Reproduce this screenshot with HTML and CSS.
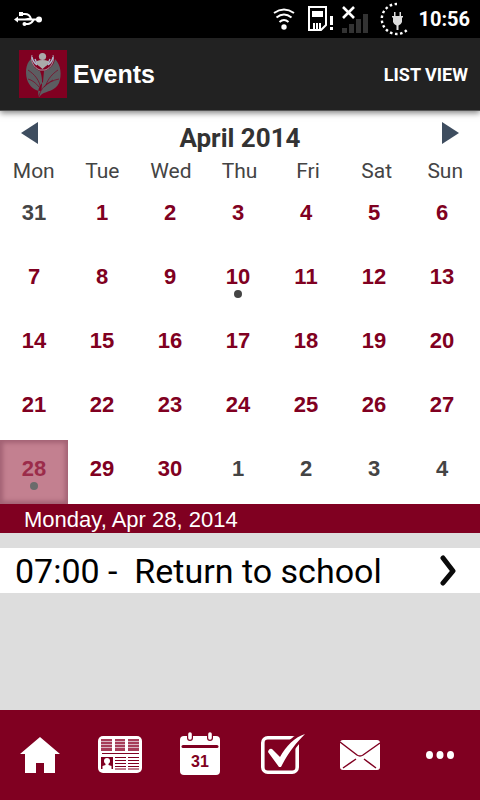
FILE: index.html
```html
<!DOCTYPE html>
<html lang="en">
<head>
  <meta charset="UTF-8">
  <meta name="viewport" content="width=device-width, initial-scale=1">
  <title>Events</title>
  <link rel="stylesheet" href="styles.css">
</head>
<body>

  <!-- Status bar -->
  <div class="status">
    <svg width="30" height="18" viewBox="0 0 30 18" fill="none" stroke="#fff" stroke-width="1.8">
      <path d="M3 9.500h22M11 9.500l6-1c-1-3-3-4.500-6-4.500H7M11 14h3c3 0 4-2 6-4.500" stroke-linejoin="round"/>
      <path d="M0 9.500l4-3v6z" fill="#fff" stroke="none"/>
      <rect x="5" y="2" width="4" height="4" fill="#fff" stroke="none"/>
      <circle cx="10.500" cy="14" r="2" fill="#fff" stroke="none"/>
      <circle cx="25" cy="9.500" r="3" fill="#fff" stroke="none"/>
    </svg>
    <div class="status-icons">
      <svg width="22" height="24" viewBox="0 0 22 24" fill="none" stroke="#fff" stroke-width="2">
        <path d="M1 6q10-7 20 0M3.500 10.500q7.500-6 15 0M6.500 15q4.500-4 9 0"/>
        <circle cx="11" cy="20" r="2.7" fill="#fff" stroke="none"/>
      </svg>
      <svg width="26" height="26" viewBox="0 0 26 26" fill="#fff">
        <path d="M1 1h17v18l-5 5H1z" fill="none" stroke="#fff" stroke-width="2"/>
        <path d="M4 5h11v6H4zM5 17h2v7H5zM8 17h2v7H8zM11 17h2v7h-2zM22 10h3v9h-3zM22 21h3v3h-3z"/>
      </svg>
      <svg width="30" height="32" viewBox="0 0 30 32">
        <path d="M0 25h5v5H0zM7 21h5v9H7zM14 16h5v14h-5zM21 11h5v19h-5z" fill="#333"/>
        <path d="M1 4l11 11M12 4L1 15" stroke="#fff" stroke-width="2.6"/>
      </svg>
      <svg width="30" height="34" viewBox="0 0 30 34">
        <path d="M17 2A15 15 0 1 0 27 28" fill="none" stroke="#fff" stroke-width="2.4" stroke-dasharray="2.5 2.5"/>
        <path d="M14 10h1.500v4h4v-4H21v4h2v1.500h-1V20q-1 3-3.500 3.500V28h-2v-4.500Q14 23 13 20v-4.500h-1V14h2z" fill="#ddd"/>
      </svg>
      <span class="clock">10:56</span>
    </div>
  </div>

  <header class="header">
    <svg width="48" height="48" viewBox="0 0 48 48">
      <rect width="48" height="48" fill="#800021"/>
      <path d="M12 9C6 14 6 25 9 32c3 6 8 9 13 9 2-8 1-15-1-20-5-2-8-6-9-12zM36 9c6 6 7 16 4 24-4 8-12 8-17 11l-3 3c-2-6 0-11 4-15l1-11c6-2 10-6 11-12z" fill="#5c5d61"/>
      <path d="M9 20c6 4 12 10 13 20M9 29c4 1 8 4 11 8M39 20c-6 4-10 9-12 15M40 29c-6 1-11 4-15 8M20 46c2-8 7-12 14-16" fill="none" stroke="#800021" stroke-width=".7"/>
      <path d="M13 5c-2 6 2 13 8 15h5c6-2 10-9 8-15" fill="#800021" stroke="#b0b6c2" stroke-width=".8"/>
      <path d="M13 7q1 5 5 8M34 7q-1 5-5 8M16 9q1 4 4 6M31 9q-1 4-4 6" fill="none" stroke="#aebbd0" stroke-width="1.300"/>
      <path d="M18 11q2-1 5.500-1t5.500 1q1 3-2 5l-3.500 3-3.500-3q-3-2-2-5z" fill="#aaa"/>
      <circle cx="23.500" cy="6.500" r="3.600" fill="#aaa"/>
    </svg>
    <h1 class="title">Events</h1>
    <button class="list-view">LIST VIEW</button>
  </header>

  <main class="main">
    <!-- Calendar -->
    <section class="calendar">
      <div class="month-bar">
        <button class="month-nav" aria-label="Previous month">
          <svg width="18" height="22" viewBox="0 0 18 22"><path d="M0 11L17 0v22z" fill="#3e4d5f"/></svg>
        </button>
        <h2 class="month">April 2014</h2>
        <button class="month-nav" aria-label="Next month">
          <svg width="18" height="22" viewBox="0 0 18 22"><path d="M18 11L1 0v22z" fill="#3e4d5f"/></svg>
        </button>
      </div>
      <table class="days">
        <thead>
          <tr><th>Mon</th><th>Tue</th><th>Wed</th><th>Thu</th><th>Fri</th><th>Sat</th><th>Sun</th></tr>
        </thead>
        <tbody>
          <tr><td class="other">31</td><td>1</td><td>2</td><td>3</td><td>4</td><td>5</td><td>6</td></tr>
          <tr><td>7</td><td>8</td><td>9</td><td class="has-event">10</td><td>11</td><td>12</td><td>13</td></tr>
          <tr><td>14</td><td>15</td><td>16</td><td>17</td><td>18</td><td>19</td><td>20</td></tr>
          <tr><td>21</td><td>22</td><td>23</td><td>24</td><td>25</td><td>26</td><td>27</td></tr>
          <tr><td class="has-event selected">28</td><td>29</td><td>30</td><td class="other">1</td><td class="other">2</td><td class="other">3</td><td class="other">4</td></tr>
        </tbody>
      </table>
    </section>

    <!-- Events of the selected day -->
    <h3 class="date">Monday, Apr 28, 2014</h3>
    <a class="event" href="#">
      <span>07:00 -&nbsp; Return to school</span>
      <svg width="18" height="32" viewBox="0 0 18 32"><path d="M4 3l10 13L4 28" fill="none" stroke="#0a0a0a" stroke-width="5" stroke-linecap="round" stroke-linejoin="round"/></svg>
    </a>
  </main>

  <!-- Bottom navigation -->
  <nav class="tabs">
    <a href="#" aria-label="Home">
      <svg width="44" height="48" viewBox="0 0 44 48"><path d="M22 6l20 17h-5v19H26V32h-8v10H7V23H2z" fill="#fff"/></svg>
    </a>
    <a href="#" aria-label="News">
      <svg width="44" height="48" viewBox="0 0 44 48">
        <rect y="5" width="44" height="37" rx="5" fill="#fff"/>
        <path d="M3 8h11v12H3zM17 8h10v12H17zM30 8h11v12H30z" fill="#a63c58"/>
        <path d="M3 10.500h38M3 13.500h38M3 16.500h38" stroke="#d9b3bf"/>
        <path d="M14 8h3v12h-3zM27 8h3v12h-3z" fill="#fff"/>
        <path d="M4 22.500h37" stroke="#800021"/>
        <path d="M3 26h12v12H3z" fill="#800021"/>
        <path d="M17 26.500h11M17 29.500h11M17 32.500h11M17 35.500h11M17 38h11M30 26.500h11M30 29.500h11M30 32.500h11M30 35.500h11M30 38h11" stroke="#800021"/>
        <circle cx="9" cy="30" r="3" fill="#fff"/>
        <path d="M7.500 32h3v2l3 1v4h-9v-4l3-1z" fill="#fff"/>
      </svg>
    </a>
    <a href="#" aria-label="Events">
      <svg width="44" height="48" viewBox="0 0 44 48">
        <rect x="2" y="5" width="40" height="39" rx="4" fill="#fff"/>
        <path d="M5 15.500h34" stroke="#800021" stroke-width="3" stroke-linecap="round"/>
        <path d="M12 3v4M32 3v4" stroke="#800021" stroke-width="6" stroke-linecap="round"/>
        <path d="M12 3v4M32 3v4" stroke="#fff" stroke-width="3.600" stroke-linecap="round"/>
        <text class="tab-day" x="22" y="36" text-anchor="middle">31</text>
      </svg>
    </a>
    <a href="#" aria-label="Tasks">
      <svg width="50" height="48" viewBox="0 0 50 48">
        <rect x="7.800" y="6.800" width="34.400" height="34.400" rx="5" fill="none" stroke="#fff" stroke-width="3.600"/>
        <path d="M14 19l3-1 8 8C31 15 40 6 50 3 41 12 33 22 26 35z" fill="#fff" stroke="#800021" stroke-width="5" stroke-linejoin="round"/>
        <path d="M13 21q1-4 4-3l8 8C31 15 40 6 50 3 41 12 33 22 26 36h-2z" fill="#fff"/>
      </svg>
    </a>
    <a href="#" aria-label="Messages">
      <svg width="44" height="48" viewBox="0 0 44 48">
        <rect x="2" y="9" width="40" height="30" rx="3" fill="#fff"/>
        <path d="M2 11l17 13q3 2 6 0l17-12M5 37l13-9M26 28l12 9" fill="none" stroke="#800021" stroke-width="1.500"/>
      </svg>
    </a>
    <a href="#" aria-label="More">
      <svg width="44" height="48" viewBox="0 0 44 48" fill="#fff"><ellipse cx="11.500" cy="24" rx="3.500" ry="4"/><ellipse cx="22" cy="24" rx="3.500" ry="4"/><ellipse cx="32.500" cy="24" rx="3.500" ry="4"/></svg>
    </a>
  </nav>

</body>
</html>
```
FILE: styles.css
```css
* {
  box-sizing: border-box;
}
body {
  margin: 0;
  min-height: 100vh;
  display: flex;
  flex-direction: column;
  background: #ddd;
  font-family: Roboto, sans-serif;
}
h1, h2, h3 {
  margin: 0;
}
button {
  padding: 0;
  border: 0;
  background: none;
  font-family: inherit;
}
svg {
  display: block;
}

/* status bar */
.status {
  display: flex;
  align-items: center;
  justify-content: space-between;
  height: 38px;
  padding: 0 10px 0 14px;
  background: #000;
  color: #fff;
}
.status-icons {
  display: flex;
  align-items: center;
  gap: 8px;
}
.status-icons svg:first-child {
  margin-right: 5px;
}
.clock {
  font-size: 20px;
  font-weight: bold;
}

/* header */
.header {
  position: relative;
  display: flex;
  align-items: center;
  height: 73px;
  padding: 0 12px 0 19px;
  background: #222;
  border-bottom: 1px solid #555;
  box-shadow: 0 2px 6px rgba(0, 0, 0, 0.5);
}
.title {
  margin-left: 6px;
  color: #fff;
  font: bold 25px "Liberation Sans", sans-serif;
}
.list-view {
  margin-left: auto;
  color: #fff;
  font-size: 18px;
  font-weight: bold;
}

/* calendar */
.main {
  flex: 1;
}
.calendar {
  background: #fff;
}
.month-bar {
  display: flex;
  justify-content: space-between;
  padding: 11px 21px 0;
  height: 47px;
}
.month-nav {
  height: 22px;
}
.month {
  color: #333;
  font-size: 26px;
  line-height: 32px;
}
.days {
  display: block;
}
.days thead,
.days tbody {
  display: block;
}
.days tr {
  display: grid;
  grid-template-columns: repeat(7, 1fr);
}
.days tbody tr {
  padding-right: 4px;
}
.days th {
  padding: 0 1px 0 0;
  color: #444;
  font-size: 21px;
  font-weight: normal;
  line-height: 26px;
}
.days td {
  height: 64px;
  padding: 16px 0 0;
  color: #800021;
  font: bold 22px/25px "Liberation Sans", sans-serif;
  text-align: center;
}
.days .other {
  color: #444;
}
.has-event::after {
  content: "";
  display: block;
  width: 8px;
  height: 8px;
  margin: 1px auto 0;
  border-radius: 50%;
  background: #444;
}
.days .selected {
  background: #c38090;
  box-shadow: inset 0 0 4px 3px #a36274;
  color: #9b2c4a;
}
.selected::after {
  background: #6b6b6b;
}

/* day events */
.date {
  padding: 3px 24px 1px;
  background: #800021;
  color: #fff;
  font: 22px/25px "Liberation Sans", sans-serif;
}
.event {
  display: flex;
  align-items: center;
  justify-content: space-between;
  height: 45px;
  margin-top: 15px;
  padding: 0 23px 0 15px;
  background: #fff;
  color: #000;
  font-size: 34px;
  text-decoration: none;
}

/* bottom navigation */
.tabs {
  display: grid;
  grid-template-columns: repeat(6, 1fr);
  height: 90px;
  background: #800021;
}
.tabs a {
  display: flex;
  align-items: center;
  justify-content: center;
}
.tab-day {
  fill: #800021;
  font: bold 16px "Liberation Sans", sans-serif;
}
```
